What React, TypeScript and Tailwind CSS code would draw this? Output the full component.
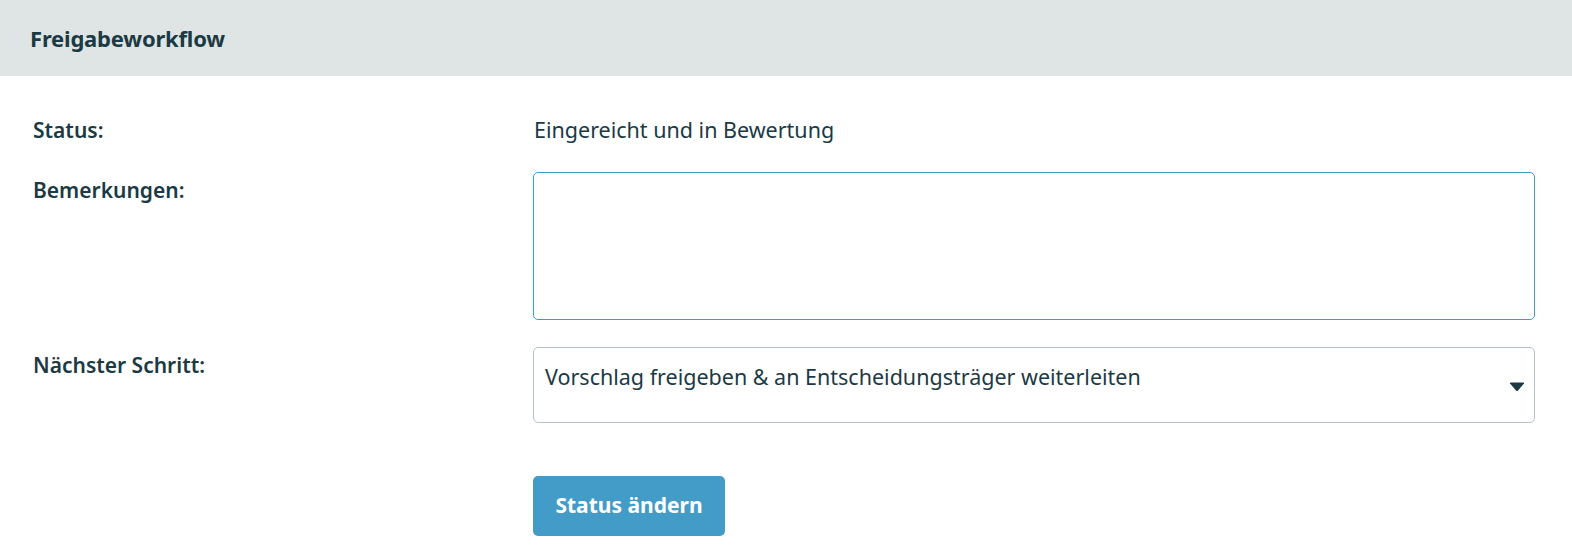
const App: React.FC = () => {
  return (
    <div className="min-h-[560px] bg-white text-[#1b3a44]" style={{ fontFamily: '"Noto Sans", "Open Sans", sans-serif' }}>
      {/* Kopfzeile */}
      <div className="h-[76px] bg-[#dfe5e5] pl-[30px] flex items-center">
        <h2 className="text-[22px] font-bold tracking-[-0.2px]">Freigabeworkflow</h2>
      </div>

      <div className="pl-[33px] pr-[37px] pt-[38px]">
        <div className="grid grid-cols-[500px_1fr] gap-y-[26px]">
          <div className="text-[21px] font-semibold leading-[32px]">Status:</div>
          <div className="text-[21.5px] leading-[32px] pl-[1px]">Eingereicht und in Bewertung</div>

          <div className="text-[21px] font-semibold leading-[32px] pt-[2px]">Bemerkungen:</div>
          <textarea className="h-[148px] w-full rounded-[5px] border border-[#3c9ccc] resize-none outline-none px-[10px] py-[8px] text-[20px]" />

          <div className="text-[21px] font-semibold leading-[32px] pt-[3px]">Nächster Schritt:</div>
          <div className="relative mt-[1px] h-[76px] rounded-[5px] border border-[#b5c3c6]">
            <div className="pl-[11px] pt-[13px] text-[21.5px] leading-[32px]">
              Vorschlag freigeben &amp; an Entscheidungsträger weiterleiten
            </div>
            <svg className="absolute right-[9px] top-[34px]" width="16" height="10" viewBox="0 0 16 10">
              <path d="M1 1.5 Q0.5 0.5 1.8 0.5 H14.2 Q15.5 0.5 15 1.5 L9 8.6 Q8 9.6 7 8.6 Z" fill="#1b3a44" />
            </svg>
          </div>

          <div />
          <div className="pt-[27px]">
            <button className="h-[60px] w-[192px] rounded-[5px] bg-[#439cc8] text-white text-[21px] font-bold">
              Status ändern
            </button>
          </div>
        </div>
      </div>
    </div>
  );
};

export default App;
